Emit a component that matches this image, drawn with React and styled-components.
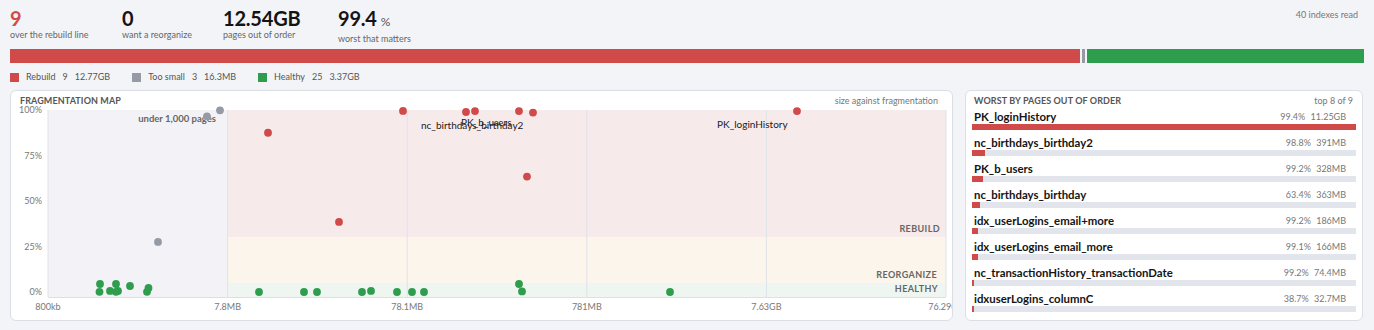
import React from "react";
import styled, { createGlobalStyle } from "styled-components";

const Global = createGlobalStyle`
  html, body { margin: 0; padding: 0; background: #f3f4f8; }
  body { font-family: "Lato", "Noto Sans", sans-serif; color: #222; }
  * { box-sizing: border-box; }
`;

const RED = "#d14a4a";
const GREEN = "#2e9e4e";
const GRAY = "#959aa5";

const Page = styled.div`
  width: 1374px;
  height: 330px;
  padding: 7px 10px 0 10px;
`;

const Header = styled.div`
  display: flex;
  justify-content: space-between;
  align-items: flex-start;
  padding-right: 6px;
`;

const Stats = styled.div`
  display: grid;
  grid-template-columns: 112px 101px 115px auto;
`;

const Stat = styled.div`
  display: flex;
  flex-direction: column;
`;

const Big = styled.div`
  font-size: 20px;
  line-height: 22px;
  font-weight: 700;
  color: ${(p) => (p.$alert ? RED : "#141414")};
  letter-spacing: -0.2px;
`;

const Unit = styled.span`
  font-size: 12px;
  font-weight: 400;
  color: #555;
  margin-left: 4px;
`;

const StatLabel = styled.div`
  font-size: 9px;
  line-height: 11px;
  color: #666;
`;

const Meta = styled.div`
  font-size: 9px;
  line-height: 12px;
  color: #777;
  margin-top: 2px;
`;

const Bar = styled.div`
  display: flex;
  gap: 2px;
  height: 14px;
  margin-top: 5px;
`;

const Seg = styled.div`
  background: ${(p) => p.$color};
  flex: ${(p) => (p.$fixed ? `0 0 ${p.$fixed}px` : `${p.$grow} 1 0`)};
`;

const Legend = styled.div`
  display: flex;
  gap: 22px;
  margin-top: 9px;
  height: 10px;
  align-items: center;
`;

const LegendItem = styled.div`
  display: flex;
  align-items: center;
  font-size: 9px;
  color: #555;
  line-height: 10px;
`;

const Swatch = styled.span`
  width: 9px;
  height: 9px;
  background: ${(p) => p.$color};
  margin-right: 7px;
`;

const Num = styled.span`
  margin-left: 7px;
`;

const Panels = styled.div`
  display: grid;
  grid-template-columns: 943px 398px;
  gap: 12px;
  margin-top: 8px;
  height: 231px;
`;

const Panel = styled.div`
  background: #fff;
  border: 1px solid #dcdee6;
  border-radius: 6px;
  display: flex;
  flex-direction: column;
  overflow: hidden;
`;

const PanelHead = styled.div`
  display: flex;
  justify-content: space-between;
  align-items: center;
  height: ${(p) => p.$h}px;
  padding: ${(p) => p.$pad};
  flex: none;
`;

const PanelTitle = styled.div`
  font-size: 9px;
  font-weight: 700;
  color: #555;
  text-transform: uppercase;
  letter-spacing: 0.1px;
`;

const PanelNote = styled.div`
  font-size: 9px;
  color: #777;
`;

const Rows = styled.div`
  display: flex;
  flex-direction: column;
  padding: 2px 6px 0 6px;
`;

const Row = styled.div`
  display: flex;
  flex-direction: column;
  height: 26px;
`;

const RowTop = styled.div`
  display: flex;
  justify-content: space-between;
  align-items: center;
  height: 14px;
  padding: 0 10px 0 2px;
`;

const RowName = styled.div`
  font-size: 11.4px;
  font-weight: 700;
  color: #141414;
`;

const RowStats = styled.div`
  font-size: 9px;
  color: #777;
  word-spacing: 3px;
`;

const Track = styled.div`
  height: 6px;
  background: #e2e5ec;
  margin-top: 1px;
`;

const Fill = styled.div`
  height: 100%;
  background: ${RED};
`;

const ChartSvg = styled.svg`
  display: block;
  overflow: visible;
  font-family: "Lato", "Noto Sans", sans-serif;
`;

const worst = [
  { name: "PK_loginHistory", pct: 99.4, size: "11.25GB", mb: 11520 },
  { name: "nc_birthdays_birthday2", pct: 98.8, size: "391MB", mb: 391 },
  { name: "PK_b_users", pct: 99.2, size: "328MB", mb: 328 },
  { name: "nc_birthdays_birthday", pct: 63.4, size: "363MB", mb: 363 },
  { name: "idx_userLogins_email+more", pct: 99.2, size: "186MB", mb: 186 },
  { name: "idx_userLogins_email_more", pct: 99.1, size: "166MB", mb: 166 },
  { name: "nc_transactionHistory_transactionDate", pct: 99.2, size: "74.4MB", mb: 74.4 },
  { name: "idxuserLogins_columnC", pct: 38.7, size: "32.7MB", mb: 32.7 },
];
const maxOut = worst[0].mb * worst[0].pct;

// chart geometry (page coordinates)
const X0 = 48, X1 = 946, Y0 = 110, Y1 = 297;
const DEC = 179.6;
const yOf = (p) => 292 - 1.82 * p;
const xTicks = ["800kb", "7.8MB", "78.1MB", "781MB", "7.63GB", "76.29GB"];
const yTicks = [100, 75, 50, 25, 0];

const dots = [
  { x: 207, p: 96.5, c: GRAY }, { x: 220, p: 99.8, c: GRAY }, { x: 158, p: 27.5, c: GRAY },
  { x: 268, p: 87.5, c: RED }, { x: 403, p: 99.5, c: RED }, { x: 466, p: 98.9, c: RED },
  { x: 475, p: 99.4, c: RED }, { x: 519, p: 99.4, c: RED }, { x: 533, p: 98.6, c: RED },
  { x: 527, p: 63.4, c: RED }, { x: 797, p: 99.4, c: RED }, { x: 339, p: 38.5, c: RED },
  { x: 100, p: 4.4, c: GREEN }, { x: 99.5, p: 0.1, c: GREEN }, { x: 110, p: 0.6, c: GREEN },
  { x: 116, p: 4.4, c: GREEN }, { x: 118, p: 0.6, c: GREEN }, { x: 116, p: 0.1, c: GREEN },
  { x: 130, p: 3.3, c: GREEN }, { x: 147, p: 0.1, c: GREEN }, { x: 148.5, p: 2.2, c: GREEN },
  { x: 259, p: 0, c: GREEN }, { x: 304, p: 0, c: GREEN }, { x: 317, p: 0, c: GREEN },
  { x: 362, p: 0, c: GREEN }, { x: 371, p: 0.6, c: GREEN }, { x: 397, p: 0, c: GREEN },
  { x: 412, p: 0, c: GREEN }, { x: 424, p: 0, c: GREEN }, { x: 519, p: 4.4, c: GREEN },
  { x: 522, p: 0.3, c: GREEN }, { x: 670, p: 0, c: GREEN },
];

function FragChart() {
  const gridXs = xTicks.map((_, i) => X0 + i * DEC);
  return (
    <ChartSvg width="941" height="213" viewBox="11 107 941 213">
      <rect x={X0} y={Y0} width={gridXs[1] - X0} height={Y1 - Y0} fill="#f3f3f7" />
      <rect x={gridXs[1]} y={Y0} width={X1 - gridXs[1]} height={yOf(30) - Y0} fill="#f7eaeb" />
      <rect x={gridXs[1]} y={yOf(30)} width={X1 - gridXs[1]} height={yOf(5) - yOf(30)} fill="#fcf5eb" />
      <rect x={gridXs[1]} y={yOf(5)} width={X1 - gridXs[1]} height={Y1 - yOf(5)} fill="#eff6f1" />
      {gridXs.map((x, i) => (
        <line key={i} x1={x} x2={x} y1={Y0} y2={Y1} stroke="#dfe2ea" strokeWidth="1" />
      ))}
      <line x1={X0} x2={X1} y1={Y1 + 0.5} y2={Y1 + 0.5} stroke="#dcdfe7" />
      {yTicks.map((t) => (
        <text key={t} x={42} y={yOf(t) + 3} textAnchor="end" fontSize="9" fill="#777">
          {t}%
        </text>
      ))}
      {xTicks.map((t, i) => (
        <text key={t} x={gridXs[i]} y={310} textAnchor="middle" fontSize="9" fill="#777">
          {t}
        </text>
      ))}
      <g fontSize="9" fontWeight="700" fill="#666" textAnchor="end" letterSpacing="0.4">
        <text x={940} y={232}>REBUILD</text>
        <text x={937} y={278}>REORGANIZE</text>
        <text x={938} y={292}>HEALTHY</text>
      </g>
      <text x={216} y={122} textAnchor="end" fontSize="9.5" fontWeight="700" fill="#666">
        under 1,000 pages
      </text>
      {dots.map((d, i) => (
        <circle key={i} cx={d.x} cy={yOf(d.p)} r="3.9" fill={d.c} />
      ))}
      <g fontSize="10" fill="#1a1a1a">
        <text x={421} y={128.5}>nc_birthdays_birthday2</text>
        <text x={461} y={125.5}>PK_b_users</text>
        <text x={717} y={127.5}>PK_loginHistory</text>
      </g>
    </ChartSvg>
  );
}

export default function App() {
  return (
    <Page>
      <Global />
      <Header>
        <Stats>
          <Stat>
            <Big $alert>9</Big>
            <StatLabel>over the rebuild line</StatLabel>
          </Stat>
          <Stat>
            <Big>0</Big>
            <StatLabel>want a reorganize</StatLabel>
          </Stat>
          <Stat>
            <Big>12.54GB</Big>
            <StatLabel>pages out of order</StatLabel>
          </Stat>
          <Stat>
            <Big>
              99.4<Unit>%</Unit>
            </Big>
            <StatLabel>worst that matters</StatLabel>
          </Stat>
        </Stats>
        <Meta>40 indexes read</Meta>
      </Header>
      <Bar>
        <Seg $color={RED} $grow={1070} />
        <Seg $color={GRAY} $fixed={3} />
        <Seg $color={GREEN} $grow={277} />
      </Bar>
      <Legend>
        <LegendItem>
          <Swatch $color={RED} />
          Rebuild<Num>9</Num>
          <Num>12.77GB</Num>
        </LegendItem>
        <LegendItem>
          <Swatch $color={GRAY} />
          Too small<Num>3</Num>
          <Num>16.3MB</Num>
        </LegendItem>
        <LegendItem>
          <Swatch $color={GREEN} />
          Healthy<Num>25</Num>
          <Num>3.37GB</Num>
        </LegendItem>
      </Legend>
      <Panels>
        <Panel>
          <PanelHead $h={16} $pad="2px 14px 0 9px">
            <PanelTitle>Fragmentation map</PanelTitle>
            <PanelNote>size against fragmentation</PanelNote>
          </PanelHead>
          <FragChart />
        </Panel>
        <Panel>
          <PanelHead $h={16} $pad="3px 9px 0 8px">
            <PanelTitle>Worst by pages out of order</PanelTitle>
            <PanelNote>top 8 of 9</PanelNote>
          </PanelHead>
          <Rows>
            {worst.map((r) => {
              const w = Math.max(0.5, ((r.mb * r.pct) / maxOut) * 100);
              return (
                <Row key={r.name}>
                  <RowTop>
                    <RowName>{r.name}</RowName>
                    <RowStats>
                      {r.pct}% {r.size}
                    </RowStats>
                  </RowTop>
                  <Track>
                    <Fill style={{ width: `${w}%` }} />
                  </Track>
                </Row>
              );
            })}
          </Rows>
        </Panel>
      </Panels>
    </Page>
  );
}
